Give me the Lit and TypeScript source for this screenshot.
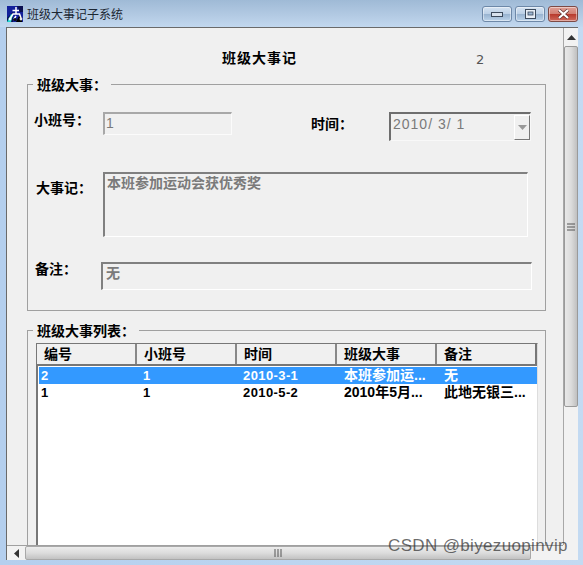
import { LitElement, html, css } from "lit";
import { customElement } from "lit/decorators.js";

const rows = [
  { id: "2", cls: "1", time: "2010-3-1", ev: "本班参加运...", note: "无", sel: true },
  { id: "1", cls: "1", time: "2010-5-2", ev: "2010年5月...", note: "此地无银三...", sel: false },
];
const cols = ["编号", "小班号", "时间", "班级大事", "备注"];

@customElement("app-root")
export class AppRoot extends LitElement {
  static styles = css`
    :host {
      display: block; width: 583px; height: 565px; overflow: hidden; position: relative;
      background: linear-gradient(90deg, #b4cfee 0%, #bcd5f0 50%, #c3daf2 100%);
      font-family: "Noto Sans CJK SC", "Liberation Sans", sans-serif;
      color: #000;
    }
    .titlebar {
      height: 27px; display: flex; align-items: flex-start; box-sizing: border-box; padding: 6px 5px 0 7px;
      background: linear-gradient(180deg, #9fbad6 0%, #b4cbe4 60%, #c2d8ef 100%);
    }
    .appicon { width: 16px; height: 16px; flex: none; }
    .apptitle { font-size: 12px; line-height: 16px; margin-left: 4px; color: #1c2733; flex: 1; }
    .wbtns { display: flex; gap: 3px; margin-top: 0; }
    .wbtn {
      box-sizing: border-box; width: 30px; height: 16px; border: 1px solid #6d88a8; border-radius: 3px;
      background: linear-gradient(180deg, #d5e3f2 0%, #bcd0e6 48%, #98b3d0 52%, #bcd3ea 100%);
      display: flex; align-items: center; justify-content: center;
      box-shadow: inset 0 0 0 1px rgba(255,255,255,.45);
    }
    .wbtn.close {
      border-color: #7d4a45;
      background: linear-gradient(180deg, #e0a096 0%, #d27f72 48%, #b83a2c 52%, #cf6a5c 100%);
    }
    .wbtn svg { display: block; }
    .client {
      margin: 0 5px 0 6px; height: 533px; box-sizing: border-box;
      border-top: 1px solid #6a6a6a; border-left: 1px solid #6a6a6a;
      display: grid; grid-template-columns: 556px 15px; grid-template-rows: 517px 15px;
      background: #f0f0f0;
    }
    .view { overflow: hidden; background: #f0f0f0; }
    .head { height: 56px; display: flex; align-items: center; box-sizing: border-box; padding: 2px 0 0 215px; }
    .heading { font-size: 14px; font-weight: 700; letter-spacing: 1px; line-height: 18px; }
    .counter { margin-left: 179px; font: 13px/14px "DejaVu Sans", sans-serif; color: #555; padding-top: 5px; }
    .group {
      position: relative; box-sizing: border-box; width: 519px; margin-left: 20px;
      border: 1px solid #a0a0a0;
    }
    .g1 { height: 227px; margin-bottom: 19px; padding-top: 27px; }
    .g2 { height: 240px; padding: 12px 0 0 8px; }
    .legend {
      position: absolute; top: -10px; left: 5px; padding: 0 4px; background: #f0f0f0;
      font-size: 14px; line-height: 18px; font-weight: 700; white-space: nowrap;
    }
    .row { display: flex; align-items: flex-start; }
    .label { font-size: 14px; line-height: 14px; font-weight: 700; flex: none; white-space: nowrap; }
    .r2 { margin-top: 31px; }
    .r3 { margin-top: 25px; }
    .l-no { margin-left: 6px; width: 69px; }
    .l-time { margin-left: 79px; width: 78px; margin-top: 4px; }
    .l-ev { margin-left: 8px; width: 67px; margin-top: 8px; }
    .l-note { margin-left: 7px; width: 66px; line-height: 12px; }
    .field {
      box-sizing: border-box; flex: none; background: #f0f0f0; color: #7a7a7a;
      font-size: 14px; font-weight: 700; line-height: 16px;
      border-style: solid; border-width: 2px 1px 1px 2px;
      border-color: #808080 #fff #fff #808080;
    }
    .f-no { width: 129px; height: 23px; padding: 1px 0 0 1px; border-color: #a8a8a8 #fbfbfb #fbfbfb #a8a8a8; font-weight: 400; font-family: "Liberation Sans", sans-serif; }
    .f-ev { width: 425px; height: 65px; padding: 0 0 0 2px; }
    .f-note { width: 431px; height: 28px; padding: 0 0 0 3px; }
    .combo {
      width: 142px; height: 29px; display: flex; align-items: center; justify-content: space-between;
      padding: 0 0 0 2px; font: 400 14px/18px "Liberation Sans", sans-serif; letter-spacing: 1px; color: #7a7a7a;
      border-color: #6e6e6e #f8f8f8 #f8f8f8 #6e6e6e; white-space: pre;
    }
    .combo span { margin-bottom: 6px; }
    .cbtn {
      width: 16px; height: 25px; box-sizing: border-box; background: #f0f0f0;
      border: 1px solid; border-color: #fff #777 #777 #fff;
      display: flex; align-items: center; justify-content: center;
    }
    .list {
      box-sizing: border-box; width: 502px; height: 240px; background: #fff;
      border-left: 2px solid #777; border-top: 1px solid #777; border-right: 1px solid #ddd;
    }
    .lhead { display: flex; height: 20px; background: #f0f0f0; border-bottom: 2px solid #777; border-right: 2px solid #777; margin-left: -1px; }
    .lh {
      box-sizing: border-box; width: 100px; flex: none; padding-left: 7px;
      font-size: 14px; line-height: 18px; font-weight: 700; border-right: 2px solid #888;
    }
    .lh:last-child { width: auto; flex: 1; border-right: 0; }
    .lbody { padding: 1px 0 0 1px; }
    .lrow { display: flex; height: 17px; font-size: 13px; font-weight: 700; line-height: 17px; }
    .lrow.sel { background: #3399ff; color: #fff; }
    .c { box-sizing: border-box; flex: none; white-space: nowrap; overflow: hidden; font-family: "Liberation Sans", "Noto Sans CJK SC", sans-serif; letter-spacing: .4px; }
    .c0 { width: 104px; padding-left: 2px; }
    .c1 { width: 100px; }
    .c2 { width: 101px; }
    .c3 { width: 100px; font-size: 14px; letter-spacing: 0; }
    .c4 { width: 93px; font-size: 14px; letter-spacing: 0; }
    .vbar { display: flex; flex-direction: column; background: #f2f2f2; border-left: 1px solid #a8a8a8; box-sizing: border-box; }
    .arrow { height: 18px; flex: none; display: flex; align-items: center; justify-content: center; }
    .vthumb {
      height: 361px; flex: none; box-sizing: border-box; border: 1px solid #9a9a9a; border-radius: 2px;
      background: linear-gradient(90deg, #e8e8e8, #dcdcdc 50%, #c0c0c0);
      display: flex; align-items: center; justify-content: center;
    }
    .hbar { display: flex; background: #f2f2f2; border-top: 1px solid #a0a0a0; box-sizing: border-box; }
    .harrow { width: 18px; flex: none; display: flex; align-items: center; justify-content: center; }
    .hthumb {
      width: 506px; flex: none; box-sizing: border-box; border: 1px solid #a8a8a8; border-radius: 2px;
      background: linear-gradient(180deg, #ececec, #dcdcdc 50%, #c2c2c2);
      display: flex; align-items: center; justify-content: center;
    }
    .corner { background: #f2f2f2; }
    .mark {
      position: absolute; left: 388px; top: 535px; font: 17px/22px "Liberation Sans", sans-serif;
      color: rgba(50,50,50,.72); white-space: nowrap; letter-spacing: .35px;
    }
  `;

  render() {
    return html`
      <div class="titlebar">
        <svg class="appicon" viewBox="0 0 16 16">
          <rect width="16" height="16" fill="#13209a"/>
          <path d="M0 12L6 6v10H0zM10 0h6v6h-3z" fill="#0a0f50"/>
          <path d="M0 16l4-8 2 1-2 7z" fill="#1fd8d0"/>
          <path d="M9 16l3-6 3 1v5z" fill="#000"/>
          <path d="M9 1v7M5.5 4.5H12M3.5 12l2.5-4h6.5l1.5 4M7 13l2-3" fill="none" stroke="#fff" stroke-width="1.5"/>
          <circle cx="3" cy="13" r="1.4" fill="#fff"/>
          <circle cx="8" cy="13.5" r="1.6" fill="#111"/>
          <circle cx="14" cy="13" r="1.4" fill="#e8e8e8"/>
        </svg>
        <div class="apptitle">班级大事记子系统</div>
        <div class="wbtns">
          <div class="wbtn"><svg width="12" height="6" viewBox="0 0 12 6"><rect x=".5" y="1.5" width="11" height="4" fill="#d8e2ee" stroke="#3c4a5c"/></svg></div>
          <div class="wbtn"><svg width="11" height="10" viewBox="0 0 11 10"><rect x=".5" y=".5" width="10" height="9" fill="#e8eef6" stroke="#3c4a5c"/><rect x="3" y="3" width="5" height="3" fill="#9db6d2" stroke="#3c4a5c" stroke-width=".8"/></svg></div>
          <div class="wbtn close"><svg width="13" height="10" viewBox="0 0 13 10"><path d="M2 1l9 8M11 1l-9 8" stroke="#5a2a28" stroke-width="3.4"/><path d="M2 1l9 8M11 1l-9 8" stroke="#fff" stroke-width="2.2"/></svg></div>
        </div>
      </div>
      <div class="client">
        <div class="view">
          <div class="head">
            <div class="heading">班级大事记</div>
            <div class="counter">2</div>
          </div>
          <div class="group g1">
            <div class="legend">班级大事&#xFF1A;</div>
            <div class="row">
              <div class="label l-no">小班号&#xFF1A;</div>
              <div class="field f-no">1</div>
              <div class="label l-time">时间&#xFF1A;</div>
              <div class="field combo">
                <span>2010/ 3/ 1</span>
                <div class="cbtn"><svg width="9" height="5" viewBox="0 0 9 5"><path d="M0 0h9L4.5 5z" fill="#999"/></svg></div>
              </div>
            </div>
            <div class="row r2">
              <div class="label l-ev">大事记&#xFF1A;</div>
              <div class="field f-ev">本班参加运动会获优秀奖</div>
            </div>
            <div class="row r3">
              <div class="label l-note">备注&#xFF1A;</div>
              <div class="field f-note">无</div>
            </div>
          </div>
          <div class="group g2">
            <div class="legend">班级大事列表&#xFF1A;</div>
            <div class="list">
              <div class="lhead">${cols.map((c) => html`<div class="lh">${c}</div>`)}</div>
              <div class="lbody">
                ${rows.map(
                  (r) => html`<div class="lrow ${r.sel ? "sel" : ""}">
                    <div class="c c0">${r.id}</div>
                    <div class="c c1">${r.cls}</div>
                    <div class="c c2">${r.time}</div>
                    <div class="c c3">${r.ev}</div>
                    <div class="c c4">${r.note}</div>
                  </div>`
                )}
              </div>
            </div>
          </div>
        </div>
        <div class="vbar">
          <div class="arrow"><svg width="9" height="5" viewBox="0 0 9 5"><path d="M4.5 0L9 5H0z" fill="#333"/></svg></div>
          <div class="vthumb"><svg width="8" height="8" viewBox="0 0 8 8"><path d="M0 1h8M0 4h8M0 7h8" stroke="#555" stroke-width="1"/></svg></div>
        </div>
        <div class="hbar">
          <div class="harrow"><svg width="5" height="9" viewBox="0 0 5 9"><path d="M0 4.5L5 0v9z" fill="#333"/></svg></div>
          <div class="hthumb"><svg width="8" height="8" viewBox="0 0 8 8"><path d="M1 0v8M4 0v8M7 0v8" stroke="#555" stroke-width="1"/></svg></div>
          <div class="harrow"></div>
        </div>
        <div class="corner"></div>
      </div>
      <div class="mark">CSDN @biyezuopinvip</div>
    `;
  }
}
